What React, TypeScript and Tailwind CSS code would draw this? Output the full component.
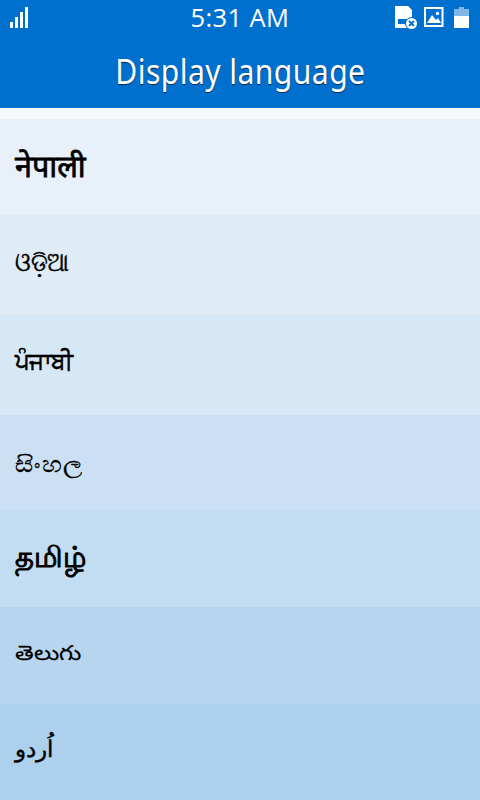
interface Language {
  name: string;
  row: string;
  text: string;
}

const languages: Language[] = [
  { name: 'नेपाली', row: 'h-[96px] pb-[4px] bg-[#e8f1f9]', text: 'text-[30.5px] [-webkit-text-stroke:0.8px_black]' },
  { name: 'ଓଡ଼ିଆ', row: 'h-[99px] pb-[7px] bg-[#dfecf6]', text: 'text-[26px] scale-x-[0.87] [-webkit-text-stroke:0.5px_black]' },
  { name: 'ਪੰਜਾਬੀ', row: 'h-[101px] pb-[8px] bg-[#d6e7f5]', text: 'text-[23.5px] scale-x-[0.96] [-webkit-text-stroke:0.7px_black]' },
  { name: 'සිංහල', row: 'h-[96px] bg-[#cce0f5]', text: 'text-[23px] tracking-[1.5px] scale-x-[1.09] [-webkit-text-stroke:0.4px_black]' },
  { name: 'தமிழ்', row: 'h-[96px] pb-[8px] bg-[#c2dcf1]', text: 'text-[29px] [-webkit-text-stroke:1.1px_black]' },
  { name: 'తెలుగు', row: 'h-[97px] pb-[8px] bg-[#b8d5ef]', text: 'text-[24px] scale-y-[0.86] [-webkit-text-stroke:0.2px_black]' },
  { name: 'اُردو', row: 'h-[96px] pb-[6px] bg-[#add1ed]', text: 'text-[22.5px] [-webkit-text-stroke:0.4px_black]' }
];

const StatusIcons = () => (
  <svg width="80" height="30" viewBox="390 0 80 30" className="block" fill="#fff">
    <path d="M395 6h13l4 4v18h-17z" />
    <path d="M398 19h9v5h-9z" fill="#0070ce" />
    <circle cx="411.5" cy="23.5" r="6.5" fill="#0070ce" />
    <circle cx="411.5" cy="23.5" r="5.5" />
    <path d="M409 21l5 5M414 21l-5 5" stroke="#0070ce" strokeWidth="1.8" />
    <rect x="425" y="8" width="17.5" height="18" fill="none" stroke="#fff" strokeWidth="2" />
    <path d="M427 23l5-8 4 5 2-2 3 5z" />
    <circle cx="437.5" cy="13.5" r="1.7" />
    <path d="M459 7h5v2h5v7h-15V9h5z" fillOpacity=".5" />
    <path d="M454 16h15v12h-15z" />
  </svg>
);

export default function App() {
  return (
    <div className="h-[800px] w-[480px] overflow-hidden bg-[#f4f8fb] font-['Noto_Sans',sans-serif] text-black">
      <header className="h-[108px] bg-[#0070ce] text-white">
        <div className="grid h-9 grid-cols-[1fr_100px_1fr]">
          <div className="flex h-7 items-end gap-[2px] pl-[10px]">
            <span className="h-[6px] w-[3px] bg-white" />
            <span className="h-[11px] w-[3px] bg-white" />
            <span className="h-[16px] w-[3px] bg-white" />
            <span className="h-[21px] w-[3px] bg-white" />
          </div>
          <span className="text-center font-['Open_Sans'] text-[25.5px] leading-[34px] tracking-[0.4px] whitespace-nowrap">5:31 AM</span>
          <div className="flex justify-end pr-[10px]">
            <StatusIcons />
          </div>
        </div>
        <h1 className="flex h-[72px] justify-center">
          <span className="inline-block scale-x-[0.86] text-[35px] leading-[69px] tracking-[0.5px] whitespace-nowrap [text-shadow:0_1px_1px_rgba(0,0,0,0.6)]">
            Display language
          </span>
        </h1>
      </header>
      <ul className="pt-[11px]">
        {languages.map((lang) => (
          <li key={lang.name} className={`flex items-center pl-[15px] ${lang.row}`}>
            <span className={`inline-block origin-left leading-none whitespace-nowrap ${lang.text}`}>{lang.name}</span>
          </li>
        ))}
      </ul>
    </div>
  );
}
